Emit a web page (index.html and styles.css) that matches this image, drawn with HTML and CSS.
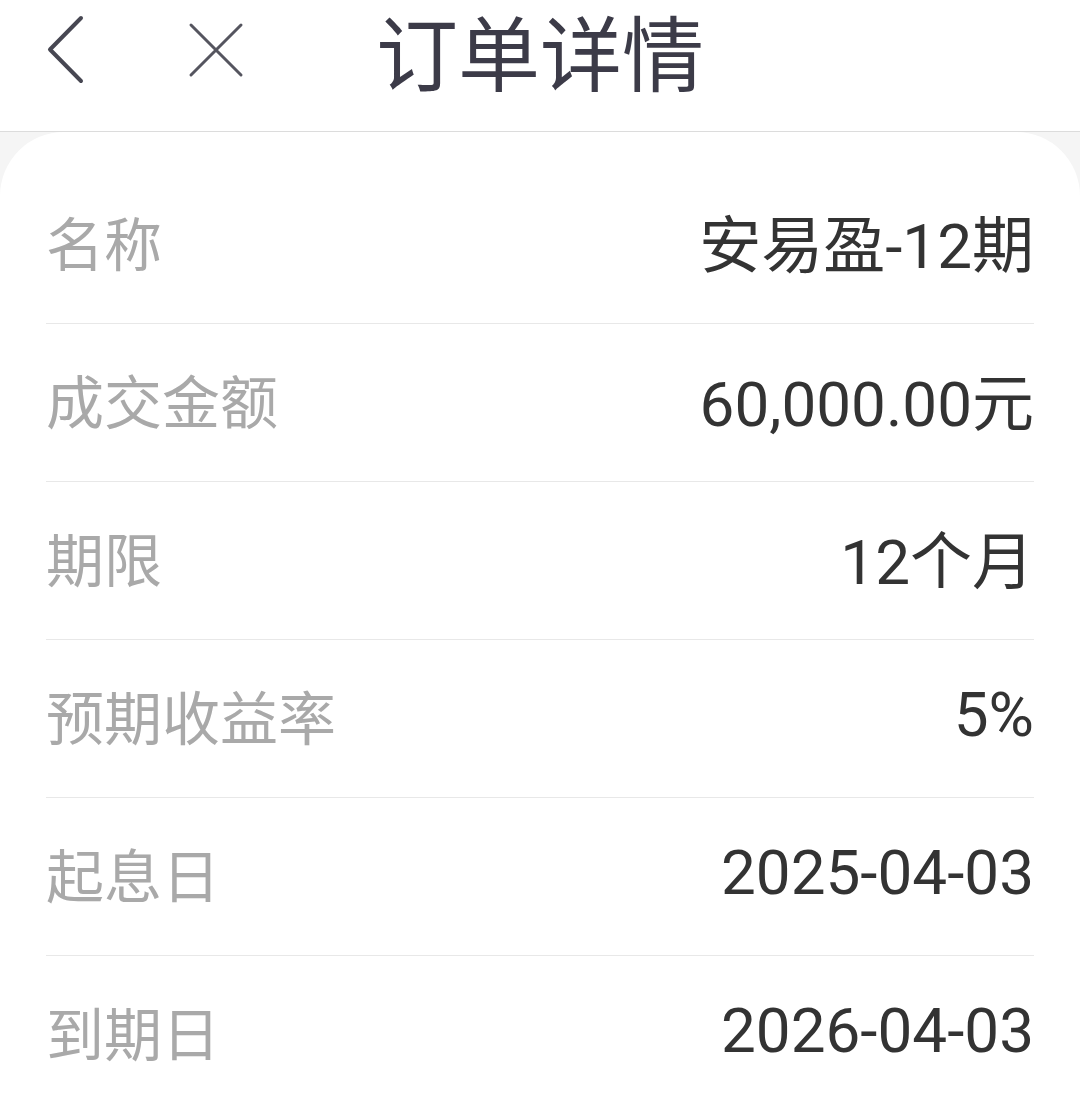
FILE: index.html
```html
<!DOCTYPE html>
<html lang="zh-CN">
<head>
    <meta charset="UTF-8">
    <meta name="viewport" content="width=device-width, initial-scale=1.0">
    <title>订单详情</title>
    <link rel="stylesheet" href="styles.css">
</head>
<body>

    <div class="top-bar">
        <div class="top-actions">
            <span class="icon-btn">
                <svg width="40" height="70" viewBox="0 0 40 70">
                    <path d="M35 3 L4 34.5 L35 66" fill="none" stroke="#474752" stroke-width="4" stroke-linecap="round" stroke-linejoin="round"/>
                </svg>
            </span>
            <span class="icon-btn close">
                <svg width="56" height="56" viewBox="0 0 56 56">
                    <path d="M3 3 L53 53 M53 3 L3 53" fill="none" stroke="#55555f" stroke-width="3" stroke-linecap="round"/>
                </svg>
            </span>
        </div>
        <h1>订单详情</h1>
        <div></div>
    </div>

    <div class="detail-card">
        <div class="detail-row">
            <span class="label">名称</span>
            <span class="value">安易盈-12期</span>
        </div>
        <div class="detail-row">
            <span class="label">成交金额</span>
            <span class="value">60,000.00元</span>
        </div>
        <div class="detail-row">
            <span class="label">期限</span>
            <span class="value">12个月</span>
        </div>
        <div class="detail-row">
            <span class="label">预期收益率</span>
            <span class="value">5%</span>
        </div>
        <div class="detail-row">
            <span class="label">起息日</span>
            <span class="value">2025-04-03</span>
        </div>
        <div class="detail-row">
            <span class="label">到期日</span>
            <span class="value">2026-04-03</span>
        </div>
    </div>

</body>
</html>
```

FILE: styles.css
```css
/* Halaman detail pesanan */
body {
    margin: 0;
    padding: 0;
    background-color: #f5f5f5;
    font-family: Roboto, "Noto Sans CJK SC", sans-serif;
}

.top-bar {
    display: grid;
    grid-template-columns: 1fr auto 1fr;
    align-items: center;
    height: 100px;
    padding-bottom: 31px;
    background-color: #fff;
    border-bottom: 1px solid #dcdcdc;
}

.top-actions {
    display: flex;
    align-items: center;
    padding-left: 46px;
    gap: 102px;
}

.icon-btn {
    display: flex;
    align-items: center;
}

.icon-btn svg {
    display: block;
}

h1 {
    margin: 0;
    font-family: "Noto Sans CJK SC", sans-serif;
    font-size: 82px;
    font-weight: 400;
    color: #3c3b48;
    line-height: 1.2;
}

.detail-card {
    background-color: #fff;
    border-radius: 64px 64px 0 0;
    padding: 34px 46px 0;
    min-height: 900px;
}

.detail-row {
    display: flex;
    justify-content: space-between;
    align-items: center;
    box-sizing: border-box;
    height: 158px;
    padding-bottom: 8px;
    border-bottom: 1px solid #e8e8e8;
}

.label {
    font-family: "Noto Sans CJK SC", sans-serif;
    font-size: 58px;
    color: #a9a9a9;
}

.value {
    font-size: 62px;
    color: #333;
}
```
